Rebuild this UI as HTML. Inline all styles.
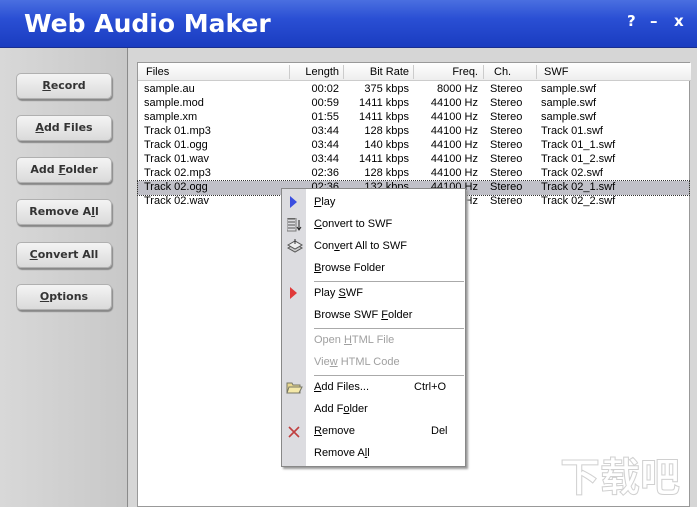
<!DOCTYPE html>
<html><head><meta charset="utf-8"><style>
*{margin:0;padding:0;box-sizing:border-box}
body{width:697px;height:507px;overflow:hidden;font-family:"Liberation Sans",sans-serif;font-size:11px;background:#d4d4d4;position:relative}
.title{position:absolute;left:0;top:0;width:697px;height:48px;background:linear-gradient(#4a6fe0 0%,#2a4fd4 40%,#1a3cc0 100%);border-bottom:1px solid #1a2f90}
.title h1{position:absolute;left:24px;top:9px;color:#fff;font:bold 25px "DejaVu Sans","Liberation Sans",sans-serif;letter-spacing:0}
.ctl{position:absolute;top:12px;color:#fff;font:bold 15px "DejaVu Sans",sans-serif}
.left{position:absolute;left:0;top:48px;width:128px;height:459px;background:linear-gradient(90deg,#d8d8d8,#c8c8c8);border-right:1px solid #8a8a8a}
.btn{position:absolute;left:16px;width:96px;height:26px;border-radius:5px;background:linear-gradient(#f4f4f4,#dadada);border:1px solid #b0b0b0;box-shadow:1px 2px 1px #888;font:bold 11px "DejaVu Sans",sans-serif;color:#333;text-align:center;line-height:24px}
.gap{position:absolute;left:129px;top:48px;width:568px;height:459px;background:#d6d6d6}
.list{position:absolute;left:137px;top:62px;width:553px;height:445px;background:#fff;border:1px solid #999}
.hdr{position:absolute;left:0;top:0;width:553px;height:18px;background:linear-gradient(#fff,#eee);border-bottom:1px solid #ccc}
.c{position:absolute;white-space:nowrap;color:#000}
.r{text-align:right}
.row{position:absolute;left:0;width:551px;height:14px}
.sel{background:#c0c0c8;outline:1px dotted #333}
.menu{position:absolute;left:281px;top:188px;width:185px;height:279px;background:#fff;border:1px solid #888;box-shadow:2px 2px 2px #999}
.ic{position:absolute;left:0;top:0;width:24px;height:100%;background:#dcdce0}
.mi{position:absolute;left:32px;color:#000;white-space:nowrap}
.dis{color:#a0a0a0}
.sep{position:absolute;left:32px;width:150px;height:1px;background:#aaa}
.wm{position:absolute;left:560px;top:445px;color:#fff;font:bold 40px "Noto Sans CJK SC",sans-serif;-webkit-text-stroke:1px #ccc;opacity:.9}
</style></head><body>
<div class="title"><h1>Web Audio Maker</h1>
<span class="ctl" style="left:627px">?</span><span class="ctl" style="left:650px">–</span><span class="ctl" style="left:674px">x</span></div>
<div class="left">
<div class="btn" style="top:25px"><u>R</u>ecord</div>
<div class="btn" style="top:67px"><u>A</u>dd Files</div>
<div class="btn" style="top:109px">Add <u>F</u>older</div>
<div class="btn" style="top:151px">Remove A<u>l</u>l</div>
<div class="btn" style="top:194px"><u>C</u>onvert All</div>
<div class="btn" style="top:236px"><u>O</u>ptions</div>
</div>
<div class="gap"></div>
<div class="list">
<div class="hdr">
<span class="c" style="left:8px;top:3px">Files</span>
<span class="c r" style="left:150px;width:51px;top:3px">Length</span>
<span class="c r" style="left:206px;width:65px;top:3px">Bit Rate</span>
<span class="c r" style="left:276px;width:64px;top:3px">Freq.</span>
<span class="c" style="left:356px;top:3px">Ch.</span>
<span class="c" style="left:406px;top:3px">SWF</span>
<div style="position:absolute;left:151px;top:2px;width:1px;height:14px;background:#ccc"></div>
<div style="position:absolute;left:205px;top:2px;width:1px;height:14px;background:#ccc"></div>
<div style="position:absolute;left:275px;top:2px;width:1px;height:14px;background:#ccc"></div>
<div style="position:absolute;left:345px;top:2px;width:1px;height:14px;background:#ccc"></div>
<div style="position:absolute;left:398px;top:2px;width:1px;height:14px;background:#ccc"></div>
</div>
<div id="rows"></div>
</div>
<div class="menu"><div class="ic"></div>
<svg style="position:absolute;left:8px;top:7px" width="8" height="12"><path d="M0 0L7 6L0 12Z" fill="#3a4ee0"/></svg>
<span class="mi" style="top:7px"><u>P</u>lay</span>
<svg style="position:absolute;left:5px;top:29px" width="16" height="14"><path d="M1 1h7M1 4h7M1 7h7M1 10h7" stroke="#555"/><rect x="0" y="0" width="9" height="13" fill="none" stroke="#777"/><path d="M12 2v10M10 9l2 3l2-3" stroke="#222" fill="none"/></svg>
<span class="mi" style="top:29px"><u>C</u>onvert to SWF</span>
<svg style="position:absolute;left:5px;top:50px" width="16" height="14"><path d="M1 9l7-4l7 4l-7 4z" fill="#ccc" stroke="#555"/><path d="M1 6l7-4l7 4l-7 4z" fill="#eee" stroke="#555"/><path d="M8 0v5" stroke="#333"/></svg>
<span class="mi" style="top:51px">Con<u>v</u>ert All to SWF</span>
<span class="mi" style="top:73px"><u>B</u>rowse Folder</span>
<div class="sep" style="top:92px"></div>
<svg style="position:absolute;left:8px;top:98px" width="8" height="12"><path d="M0 0L7 6L0 12Z" fill="#e03a3a"/></svg>
<span class="mi" style="top:98px">Play <u>S</u>WF</span>
<span class="mi" style="top:120px">Browse SWF <u>F</u>older</span>
<div class="sep" style="top:139px"></div>
<span class="mi dis" style="top:145px">Open <u>H</u>TML File</span>
<span class="mi dis" style="top:167px">Vie<u>w</u> HTML Code</span>
<div class="sep" style="top:186px"></div>
<svg style="position:absolute;left:4px;top:191px" width="17" height="14"><path d="M1 3h5l1 2h7v8H1z" fill="#e8d890" stroke="#776"/><path d="M3 7h13l-3 6H1z" fill="#f4e8a8" stroke="#776"/></svg>
<span class="mi" style="top:192px"><u>A</u>dd Files...</span>
<span class="mi" style="top:192px;left:132px">Ctrl+O</span>
<span class="mi" style="top:214px">Add F<u>o</u>lder</span>
<svg style="position:absolute;left:6px;top:237px" width="12" height="12"><path d="M1 1l10 10M11 1L1 11" stroke="#c04040" stroke-width="1.6"/></svg>
<span class="mi" style="top:236px"><u>R</u>emove</span>
<span class="mi" style="top:236px;left:149px">Del</span>
<span class="mi" style="top:258px">Remove A<u>l</u>l</span>
</div>
<div class="wm">下载吧</div>
<script>
var d=[["sample.au","00:02","375 kbps","8000 Hz","sample.swf"],["sample.mod","00:59","1411 kbps","44100 Hz","sample.swf"],["sample.xm","01:55","1411 kbps","44100 Hz","sample.swf"],["Track 01.mp3","03:44","128 kbps","44100 Hz","Track 01.swf"],["Track 01.ogg","03:44","140 kbps","44100 Hz","Track 01_1.swf"],["Track 01.wav","03:44","1411 kbps","44100 Hz","Track 01_2.swf"],["Track 02.mp3","02:36","128 kbps","44100 Hz","Track 02.swf"],["Track 02.ogg","02:36","132 kbps","44100 Hz","Track 02_1.swf"],["Track 02.wav","02:36","1411 kbps","44100 Hz","Track 02_2.swf"]];
var h="";d.forEach(function(r,i){h+='<div class="row'+(i==7?' sel':'')+'" style="top:'+(20+i*14)+'px"><span class="c" style="left:6px">'+r[0]+'</span><span class="c r" style="left:150px;width:51px">'+r[1]+'</span><span class="c r" style="left:206px;width:65px">'+r[2]+'</span><span class="c r" style="left:276px;width:64px">'+r[3]+'</span><span class="c" style="left:352px">Stereo</span><span class="c" style="left:403px">'+r[4]+'</span></div>'});
document.getElementById("rows").innerHTML=h;
</script>
</body></html>
